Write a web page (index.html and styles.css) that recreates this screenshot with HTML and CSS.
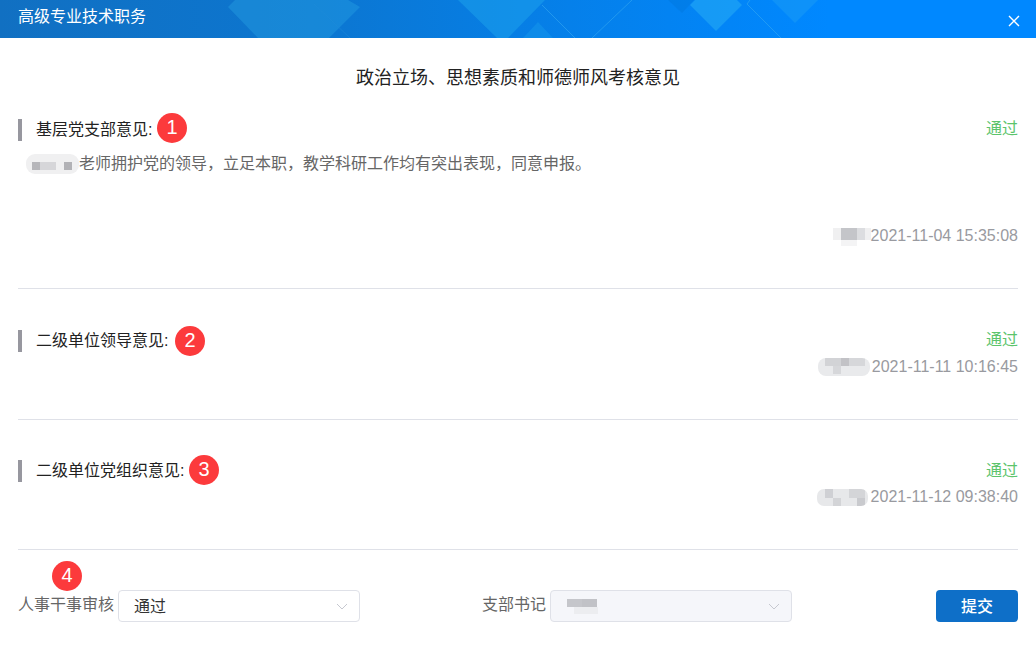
FILE: index.html
```html
<!DOCTYPE html>
<html lang="zh-CN">
<head>
<meta charset="utf-8">
<title>高级专业技术职务</title>
<link rel="stylesheet" href="styles.css">
</head>
<body>
<div class="dialog">
  <header class="dialog-head">
    <svg class="head-art" width="1036" height="38" viewBox="0 0 1036 38" aria-hidden="true">
      <polygon points="235,0 348,0 360,7 329,38 258,38 228,7" fill="#2aa5e6" opacity=".38"/>
      <polyline points="314,4 350,38" fill="none" stroke="#1f8cdc" stroke-width="1" opacity=".5"/>
      <polygon points="458,0 545,0 508,38 497,38" fill="#22a9ee" opacity=".45"/>
      <polygon points="523,38 538,22 553,38" fill="#22a9ee" opacity=".3"/>
      <polyline points="542,5 575,38" fill="none" stroke="#35a8f0" stroke-width="1" opacity=".6"/>
      <polyline points="592,38 632,0" fill="none" stroke="#35a8f0" stroke-width="1" opacity=".6"/>
      <polygon points="668,0 682,13 694,0" fill="#0073d8" opacity=".35"/>
      <polygon points="695,0 737,0 742,5 716,31 690,5" fill="#1fa4f5" opacity=".7"/>
      <polyline points="750,0 747,4 781,38" fill="none" stroke="#35a8f0" stroke-width="1" opacity=".6"/>
      <polygon points="772,0 818,0 795,23" fill="#1fa0f5" opacity=".45"/>
    </svg>
    <h1 class="dialog-title">高级专业技术职务</h1>
    <svg class="close-icon" width="12" height="12" viewBox="0 0 12 12" aria-hidden="true">
      <path d="M1 1 L11 11 M11 1 L1 11" stroke="#fff" stroke-width="1.4" fill="none"/>
    </svg>
  </header>

  <main class="dialog-body">
    <h2 class="page-title">政治立场、思想素质和师德师风考核意见</h2>

    <section class="opinion opinion-first">
      <div class="opinion-head">
        <span class="opinion-label">基层党支部意见:<span class="badge badge-inline badge-one">1</span></span>
        <span class="status">通过</span>
      </div>
      <p class="opinion-text"><span class="mosaic mosaic-name"></span>老师拥护党的领导，立足本职，教学科研工作均有突出表现，同意申报。</p>
      <div class="signature signature-first"><span class="mosaic mosaic-s1"></span>2021-11-04 15:35:08</div>
    </section>

    <section class="opinion opinion-second">
      <div class="opinion-head">
        <span class="opinion-label">二级单位领导意见:<span class="badge badge-inline badge-two">2</span></span>
        <span class="status">通过</span>
      </div>
      <div class="signature signature-lower"><span class="mosaic mosaic-s2"></span>2021-11-11 10:16:45</div>
    </section>

    <section class="opinion opinion-third">
      <div class="opinion-head">
        <span class="opinion-label">二级单位党组织意见:<span class="badge badge-inline badge-three">3</span></span>
        <span class="status">通过</span>
      </div>
      <div class="signature signature-lower"><span class="mosaic mosaic-s3"></span>2021-11-12 09:38:40</div>
    </section>

    <form class="review-bar">
      <div class="field field-hr">
        <label class="field-label">人事干事审核<span class="badge badge-over">4</span></label>
        <div class="select">
          <span class="select-value">通过</span>
          <svg class="chevron" width="12" height="7" viewBox="0 0 12 7" aria-hidden="true"><path d="M1 1 L6 6 L11 1" fill="none" stroke="#c6c8d0" stroke-width="1"/></svg>
        </div>
      </div>
      <div class="field field-sec">
        <label class="field-label">支部书记</label>
        <div class="select select-disabled">
          <span class="mosaic mosaic-sel"></span>
          <svg class="chevron" width="12" height="7" viewBox="0 0 12 7" aria-hidden="true"><path d="M1 1 L6 6 L11 1" fill="none" stroke="#c6c8d0" stroke-width="1"/></svg>
        </div>
      </div>
      <button class="submit" type="button">提交</button>
    </form>
  </main>
</div>
</body>
</html>
```
FILE: styles.css
```css
* { box-sizing: border-box; }
html, body { margin: 0; padding: 0; }
body {
  width: 1036px;
  height: 659px;
  overflow: hidden;
  background: #fff;
  font-family: "Liberation Sans", "Noto Sans CJK SC", sans-serif;
  font-size: 16px;
  color: #303133;
}
.dialog { display: flex; flex-direction: column; height: 659px; }
.dialog-head {
  position: relative;
  height: 38px;
  flex: none;
  display: flex;
  align-items: center;
  justify-content: space-between;
  padding: 0 16px 0 18px;
  background: linear-gradient(90deg, #1170c2 0%, #0c76d0 30%, #0580ea 55%, #0088ff 80%, #0088ff 100%);
  overflow: hidden;
}
.head-art { position: absolute; left: 0; top: 0; }
.dialog-title {
  position: relative;
  margin: 0 0 5px;
  font-size: 16px;
  font-weight: 400;
  line-height: 24px;
  color: #fff;
}
.close-icon { position: relative; margin-top: 3px; }
.dialog-body { flex: 1; padding: 0 18px; }
.page-title {
  margin: 0;
  padding-top: 27px;
  font-size: 18px;
  line-height: 26px;
  font-weight: 400;
  text-align: center;
  color: #222;
}
.opinion { border-bottom: 1px solid #dfe1e8; }
.opinion-first { margin-top: 25px; height: 173px; }
.opinion-second { padding-top: 38px; height: 131px; }
.opinion-third { padding-top: 37px; height: 130px; }
.opinion-head {
  display: flex;
  justify-content: space-between;
  align-items: flex-start;
  height: 24px;
}
.opinion-label {
  position: relative;
  display: flex;
  align-items: center;
  width: max-content;
  height: 22px;
  margin-top: 3px;
  padding: 0 0 4px 14px;
  border-left: 4px solid #97979f;
  color: #222;
}
.status { color: #5cc46c; line-height: 24px; margin-top: 1px; }
.opinion-third .status { margin-top: 2px; }
.opinion-text {
  margin: 0;
  padding: 12px 0 0 8px;
  line-height: 24px;
  color: #666;
  display: flex;
  align-items: center;
}
.signature {
  display: flex;
  justify-content: flex-end;
  align-items: center;
  height: 24px;
  color: #999aa0;
}
.signature-first { margin-top: 48px; }
.signature-lower { margin-top: 4px; }
.badge {
  position: absolute;
  width: 30px;
  height: 30px;
  border-radius: 50%;
  background: #fc3a3c;
  color: #fff;
  font-size: 20px;
  line-height: 28px;
  text-align: center;
}
.badge-inline { left: 100%; margin-left: 4.5px; }
.badge-one { top: -6px; }
.badge-two { top: -4px; margin-left: 6.5px; }
.badge-three { top: -5px; }
.badge-over { left: 34px; top: -29px; }
.mosaic {
  display: inline-block;
  flex: none;
  height: 20px;
  filter: blur(.4px);
}
.mosaic-name {
  width: 53px;
  height: 20px;
  border-radius: 9px;
  background:
    linear-gradient(#b6b6ba, #b6b6ba) 6px 8px / 8px 8px no-repeat,
    linear-gradient(#b2b2b6, #b2b2b6) 38px 8px / 8px 8px no-repeat,
    linear-gradient(#d6d6d9, #d6d6d9) 14px 8px / 16px 8px no-repeat,
    #f0f0f1;
}
.mosaic-s1 {
  width: 38px;
  height: 20px;
  background:
    linear-gradient(#c4c5c9, #c4c5c9) 8px 2px / 16px 12px no-repeat,
    linear-gradient(#dcdde0, #dcdde0) 24px 2px / 8px 12px no-repeat,
    linear-gradient(#f4f4f5, #f4f4f5) 8px 14px / 16px 6px no-repeat,
    linear-gradient(#f0f0f1, #f0f0f1) 0 2px / 38px 12px no-repeat;
}
.mosaic-s2 {
  width: 52px;
  height: 18px;
  border-radius: 8px;
  margin-right: 2px;
  background:
    linear-gradient(#c2c2c6, #c2c2c6) 23px 0 / 8px 8px no-repeat,
    linear-gradient(#d2d3d6, #d2d3d6) 7px 0 / 16px 8px no-repeat,
    linear-gradient(#d6d7da, #d6d7da) 31px 0 / 16px 8px no-repeat,
    linear-gradient(#d6d7da, #d6d7da) 15px 8px / 8px 8px no-repeat,
    #e9eaec;
}
.mosaic-s3 {
  width: 51px;
  height: 17px;
  border-radius: 7px;
  margin-right: 3px;
  background:
    linear-gradient(#cfd0d4, #cfd0d4) 8px 0 / 8px 9px no-repeat,
    linear-gradient(#d4d5d8, #d4d5d8) 32px 0 / 16px 9px no-repeat,
    linear-gradient(#d3d4d7, #d3d4d7) 16px 9px / 8px 8px no-repeat,
    linear-gradient(#c9cace, #c9cace) 40px 9px / 8px 8px no-repeat,
    #e7e8ea;
}
.review-bar {
  position: relative;
  display: flex;
  align-items: center;
  margin-top: 40px;
  height: 32px;
}
.field { display: flex; align-items: center; gap: 4px; }
.field-sec { margin-left: 122px; }
.field-label { position: relative; color: #666; line-height: 30px; margin-bottom: 2px; }
.select {
  display: flex;
  align-items: center;
  justify-content: space-between;
  width: 242px;
  height: 32px;
  padding: 0 11px 0 15px;
  border: 1px solid #dfe1e8;
  border-radius: 4px;
  background: #fff;
  color: #333;
}
.select-value { margin-top: -2px; }
.select-disabled { background: #f5f6fa; }
.mosaic-sel {
  width: 32px;
  height: 15px;
  background:
    linear-gradient(#c5c6cb, #c5c6cb) 1px 0 / 15px 8px no-repeat,
    linear-gradient(#c1c2c7, #c1c2c7) 16px 0 / 15px 8px no-repeat,
    linear-gradient(#ecedf0, #ecedf0) 8px 8px / 24px 7px no-repeat;
}
.submit {
  margin-left: auto;
  width: 82px;
  height: 32px;
  border: 0;
  border-radius: 4px;
  padding: 0 0 2px;
  background: #0e6fc8;
  color: #fff;
  font: inherit;
  font-weight: 500;
}
```
